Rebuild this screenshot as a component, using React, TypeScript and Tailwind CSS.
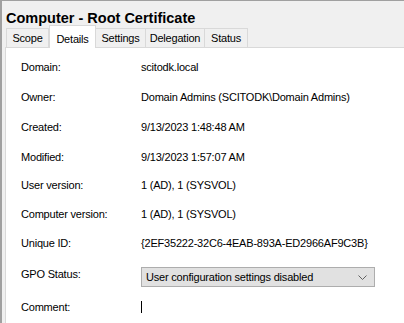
const rows: { label: string; value: string; h: string }[] = [
  { label: 'Domain:', value: 'scitodk.local', h: 'h-[30px]' },
  { label: 'Owner:', value: 'Domain Admins (SCITODK\\Domain Admins)', h: 'h-[30px]' },
  { label: 'Created:', value: '9/13/2023 1:48:48 AM', h: 'h-[31px]' },
  { label: 'Modified:', value: '9/13/2023 1:57:07 AM', h: 'h-[29px]' },
  { label: 'User version:', value: '1 (AD), 1 (SYSVOL)', h: 'h-[27px]' },
  { label: 'Computer version:', value: '1 (AD), 1 (SYSVOL)', h: 'h-[30px]' },
  { label: 'Unique ID:', value: '{2EF35222-32C6-4EAB-893A-ED2966AF9C3B}', h: 'h-[29px]' },
];

const tabs = [
  { name: 'Scope', w: 'w-[43px]' },
  { name: 'Details', w: 'w-[47px]' },
  { name: 'Settings', w: 'w-[50px]' },
  { name: 'Delegation', w: 'w-[59px]' },
  { name: 'Status', w: 'w-[43px]' },
];

export default function App() {
  return (
    <div className="w-[404px] h-[323px] overflow-hidden bg-[#f0f0f0] border-l-2 border-t border-[#a0a0a0] font-['Liberation_Sans',Arial,sans-serif] text-[11px] tracking-[-0.2px] text-black">
      <div className="h-[24px] pl-[4px] pt-[10px] font-bold text-[14.5px] tracking-normal leading-none whitespace-nowrap">
        Computer - Root Certificate
      </div>

      <div className="flex items-end h-[22px] pl-[4px]">
        {tabs.map((t, i) =>
          t.name === 'Details' ? (
            <div
              key={t.name}
              className={`${t.w} h-[23px] -mb-px relative z-10 bg-white border-x border-t border-[#d9d9d9] flex items-start justify-center pt-[5px]`}
            >
              {t.name}
            </div>
          ) : (
            <div
              key={t.name}
              className={`${t.w} h-[19px] border-t border-r ${i === 0 ? 'border-l' : ''} border-[#d9d9d9] flex items-center justify-center`}
            >
              {t.name}
            </div>
          )
        )}
      </div>

      <div className="ml-[3px] h-[300px] bg-white border-l border-t border-[#d9d9d9] pt-[4px] pl-[15px]">
        {rows.map((r) => (
          <div key={r.label} className={`${r.h} flex items-center whitespace-nowrap`}>
            <span className="w-[120px]">{r.label}</span>
            <span>{r.value}</span>
          </div>
        ))}

        <div className="flex items-start pt-[9px] h-[40px]">
          <span className="w-[120px] -mt-[1px]">GPO Status:</span>
          <div className="w-[234px] h-[20px] bg-[#e1e1e1] border border-[#adadad] flex items-center justify-between pl-[4px] pr-[7px]">
            <span>User configuration settings disabled</span>
            <svg width="9" height="5" viewBox="0 0 9 5" className="text-[#606060]">
              <path d="M0.5 0.5 L4.5 4.5 L8.5 0.5" fill="none" stroke="currentColor" strokeWidth="1" />
            </svg>
          </div>
        </div>

        <div className="flex items-center h-[22px] -mt-[2px]">
          <span className="w-[120px]">Comment:</span>
          <div className="w-px h-[12px] bg-black" />
        </div>
      </div>
    </div>
  );
}
